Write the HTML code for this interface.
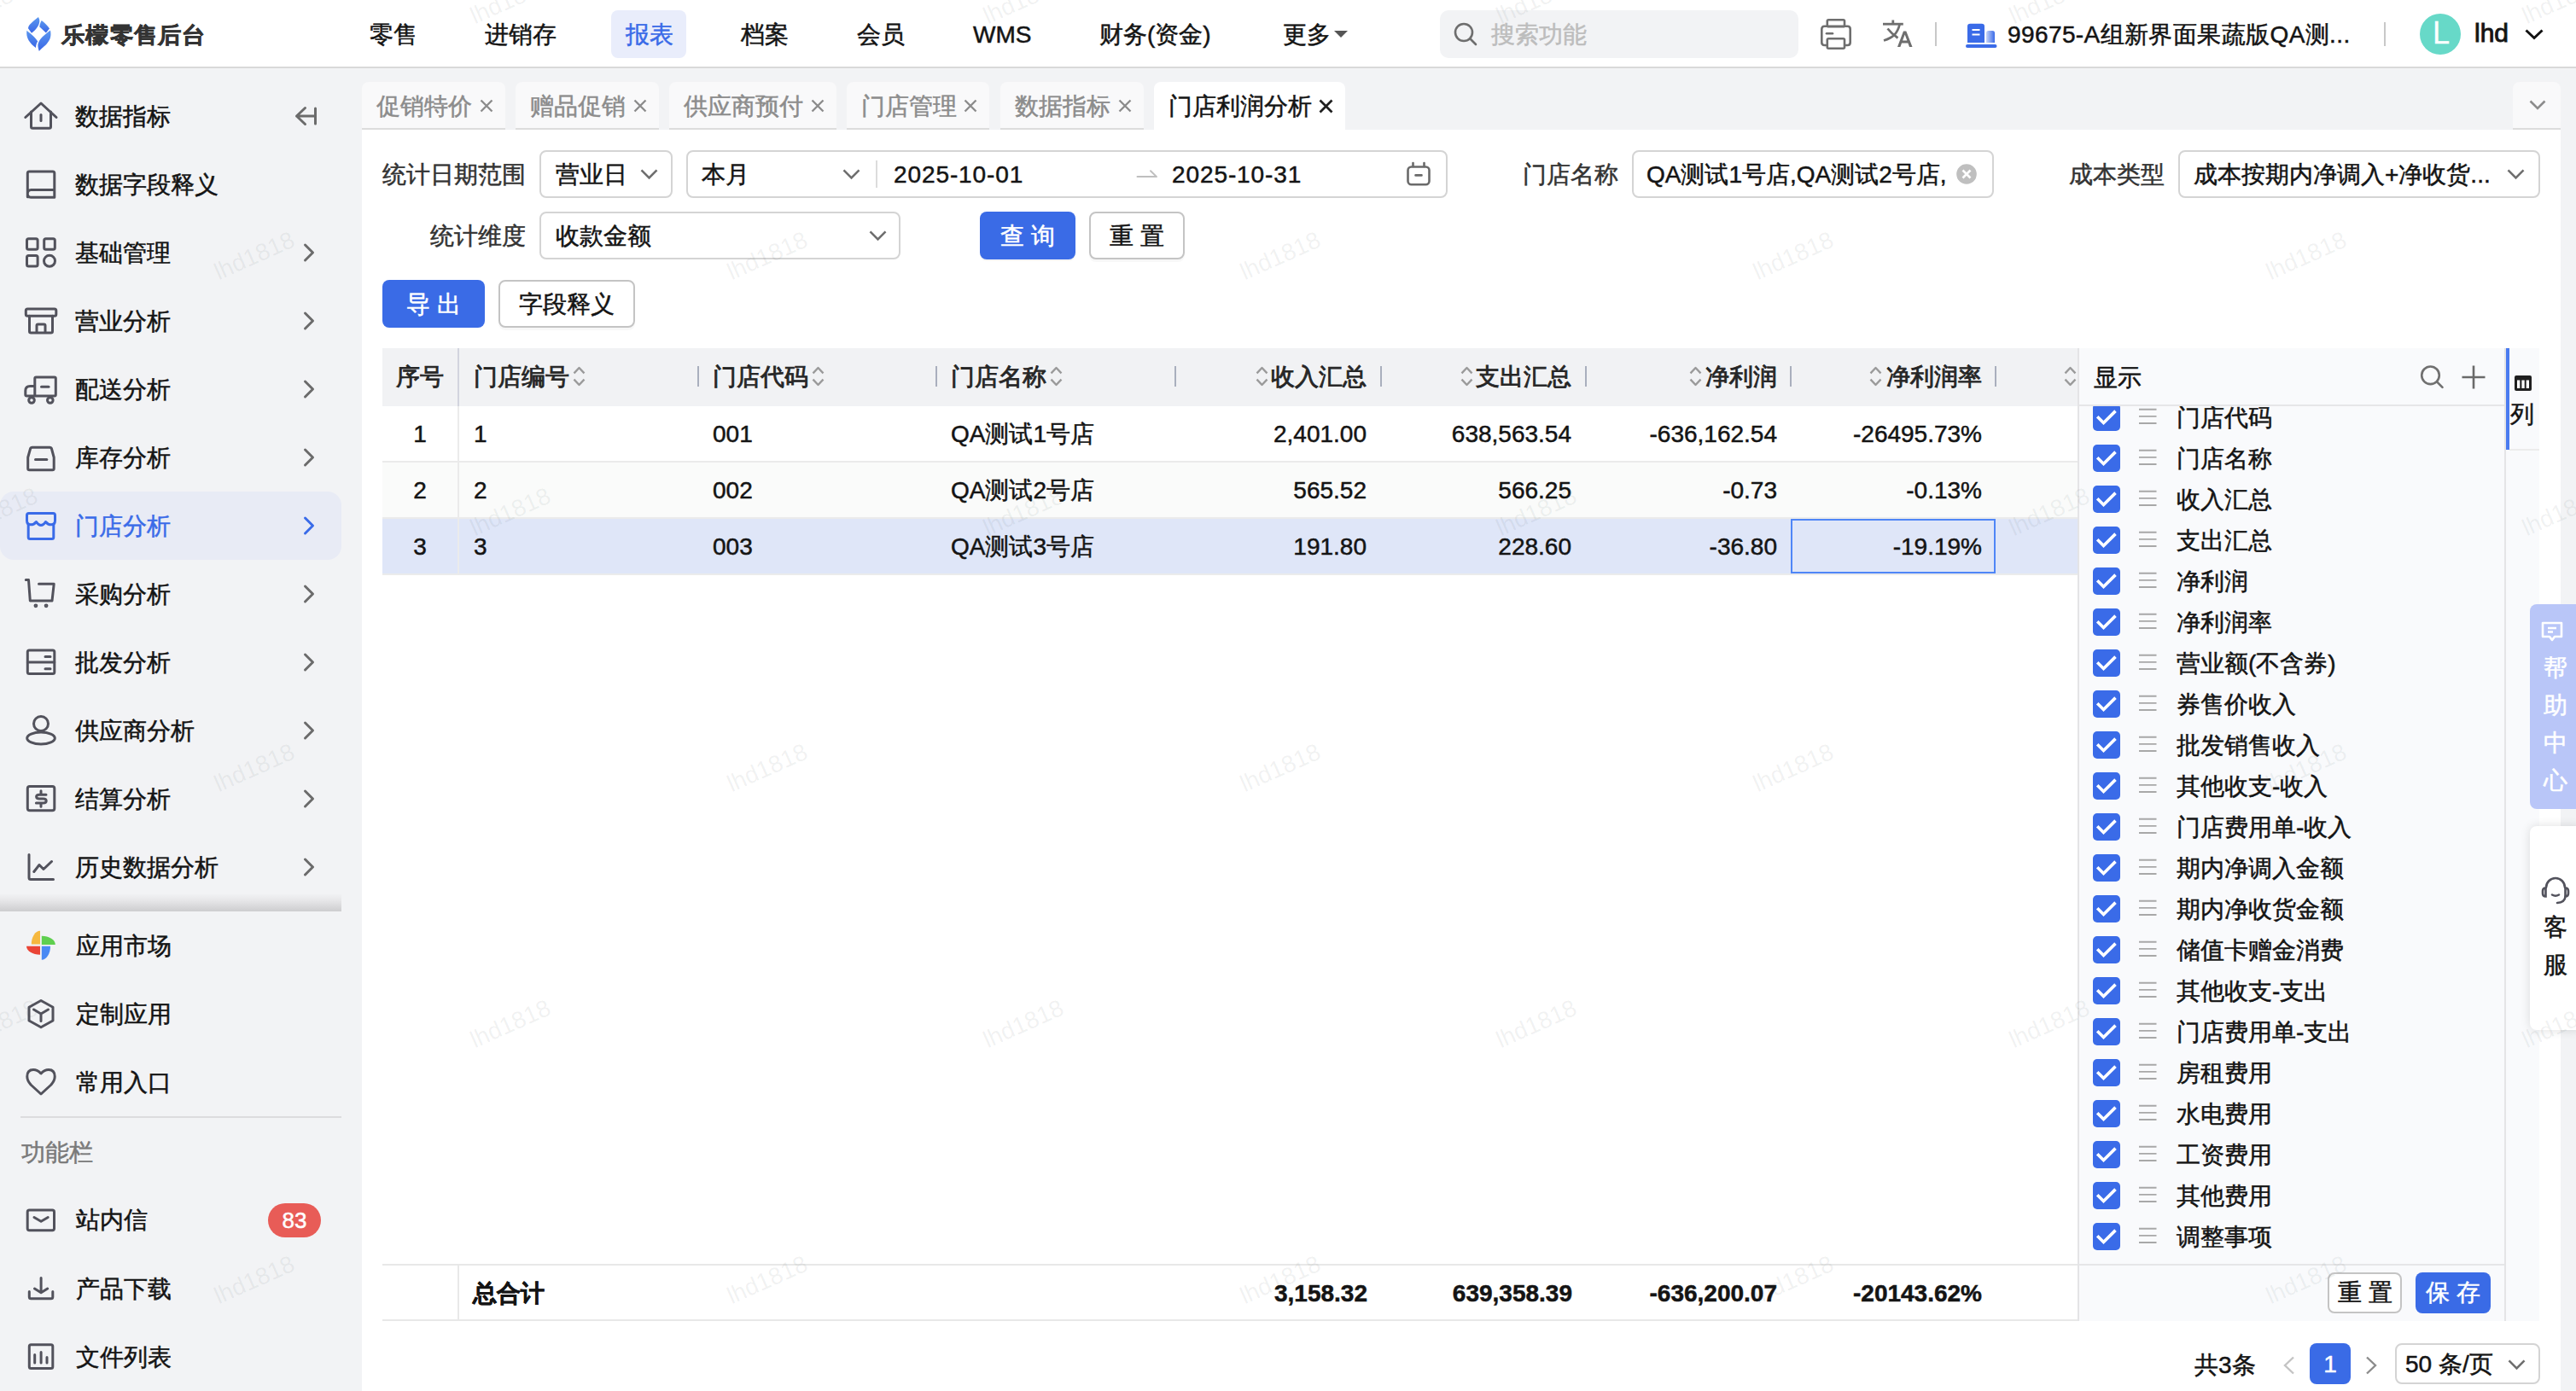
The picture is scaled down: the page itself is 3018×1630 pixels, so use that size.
<!DOCTYPE html>
<html><head><meta charset="utf-8">
<style>
*{box-sizing:border-box;margin:0;padding:0}
html,body{width:3018px;height:1630px;overflow:hidden}
body{position:relative;background:#f2f3f5;font-family:"Liberation Sans",sans-serif;color:#141414}
.a{position:absolute}
.t{position:absolute;white-space:nowrap;font-size:28px;line-height:40px;-webkit-text-stroke:0.5px currentColor}
svg{position:absolute;overflow:visible}
#hdr{left:0;top:0;width:3018px;height:78px;background:#fff}
#hdrb{left:0;top:78px;width:3018px;height:2px;background:#d9d9d9}
#side{left:0;top:80px;width:400px;height:1550px;background:#f2f3f5}
#main{left:424px;top:152px;width:2576px;height:1478px;background:#fff}
#rstrip{left:3000px;top:80px;width:18px;height:1550px;background:#f2f3f5}
.tab{position:absolute;top:96px;height:56px;background:#f9f9fa;border-radius:8px 8px 0 0;border-bottom:2px solid #dcdcdc}
.tab .t{top:8px;left:17px;color:#8c8c8c}
.nav{color:#141414}
.box{position:absolute;border:2px solid #d4d4d4;border-radius:8px;background:#fff}
.btnp{position:absolute;background:#3a6be6;border-radius:8px;color:#fff}
.side .t{color:#141414}
</style></head><body>
<div class="a" id="hdr"></div>
<div class="a" id="hdrb"></div>
<div class="a" id="side"></div>
<div class="a" id="rstrip"></div>
<div class="a" id="main"></div>

<!-- HEADER -->
<svg style="left:30.6px;top:20px" width="29" height="40" viewBox="0 0 29 40">
<defs><linearGradient id="lg" x1="0" y1="0" x2="0" y2="1"><stop offset="0" stop-color="#5b98ef"/><stop offset="1" stop-color="#3a66e6"/></linearGradient></defs>
<path fill="url(#lg)" d="M14,0 C8,5 2,9 2,13.2 L6,18.8 C12,14 16,9 15.2,3 Z"/>
<path fill="url(#lg)" d="M17.7,3.9 C16,7 15,10 15.5,11.4 L22.9,18.5 L27,13.4 C25,10 21,6.5 17.7,3.9 Z"/>
<path fill="url(#lg)" d="M0.4,15.7 C-1,24 4,31 11,36 C11,33 12,30 13.2,28.5 C9,22 4,19 0.4,15.7 Z"/>
<path fill="url(#lg)" d="M28,15.5 C22,20 14,26 13.4,32.6 C13.4,35 14,38 14.9,39.9 C20,34 31,29 28,15.5 Z"/>
</svg>
<div class="t" style="left:72px;top:21px;font-weight:bold;color:#333;letter-spacing:1.3px;font-size:27px;-webkit-text-stroke:0.6px #333;transform:scaleY(0.95);transform-origin:0 50%">乐檬零售后台</div>
<div class="t nav" style="left:433px;top:21px">零售</div>
<div class="t nav" style="left:568px;top:21px">进销存</div>
<div class="a" style="left:716px;top:12px;width:88px;height:56px;background:#e9edfb;border-radius:8px"></div>
<div class="t" style="left:733px;top:21px;color:#3a6be8">报表</div>
<div class="t nav" style="left:868px;top:21px">档案</div>
<div class="t nav" style="left:1004px;top:21px">会员</div>
<div class="t nav" style="left:1140px;top:21px">WMS</div>
<div class="t nav" style="left:1288px;top:21px">财务(资金)</div>
<div class="t nav" style="left:1503px;top:21px">更多</div>
<svg style="left:1563px;top:36px" width="16" height="8" viewBox="0 0 16 8"><path d="M0,0 L16,0 L8,8 Z" fill="#555"/></svg>
<div class="a" style="left:1687px;top:12px;width:420px;height:56px;background:#f2f3f5;border-radius:10px"></div>
<svg style="left:1703px;top:26px" width="28" height="28" viewBox="0 0 28 28"><circle cx="12" cy="12" r="10" fill="none" stroke="#6e6e6e" stroke-width="2.6"/><path d="M19.5,19.5 L26,26" stroke="#6e6e6e" stroke-width="2.6" stroke-linecap="round"/></svg>
<div class="t" style="left:1747px;top:21px;color:#bdbdbd">搜索功能</div>
<!-- print -->
<svg style="left:2133px;top:22px" width="36" height="36" viewBox="0 0 36 36" fill="none" stroke="#6e6e6e" stroke-width="2.6">
<rect x="7.8" y="1.3" width="20.2" height="8" rx="1.5"/>
<path d="M7.5,31 H4.5 Q1.3,31 1.3,27.8 V12 Q1.3,8.8 4.5,8.8 H31.5 Q34.7,8.8 34.7,12 V27.8 Q34.7,31 31.5,31 H28.5"/>
<rect x="7.8" y="23.3" width="20.2" height="11.4" rx="1.5"/>
<path d="M7,17.3 H14" stroke-linecap="round"/>
</svg>
<!-- translate -->
<svg style="left:2206px;top:23px" width="36" height="33" viewBox="0 0 36 33">
<path d="M0,5.2 H23.8" stroke="#6e6e6e" stroke-width="2.8"/>
<path d="M11.8,0.5 V4" stroke="#6e6e6e" stroke-width="2.8"/>
<path d="M19.5,6 C17,16 12,21 1,24.5" fill="none" stroke="#6e6e6e" stroke-width="2.8"/>
<path d="M5.5,10.5 C9,15 13,18.5 17.5,21.5" fill="none" stroke="#6e6e6e" stroke-width="2.8"/>
<path d="M17,32 L24,13.5 H27.3 L34.5,32 H31 L29.4,27.6 H22 L20.4,32 Z M23.1,24.6 H28.3 L25.7,17.5 Z" fill="#6e6e6e"/>
</svg>
<div class="a" style="left:2267px;top:26px;width:2px;height:28px;background:#c8c8c8"></div>
<!-- store -->
<svg style="left:2303px;top:27px" width="37" height="30" viewBox="0 0 37 30">
<defs><linearGradient id="sg" x1="0" y1="0" x2="1" y2="0"><stop offset="0" stop-color="#c7d4f7"/><stop offset="1" stop-color="#3a6be8"/></linearGradient></defs>
<path d="M2,23 V4 Q2,0.7 5.3,0.7 H18.7 Q22,0.7 22,4 V23 Z" fill="#3a6be8"/>
<path d="M7.5,8 H16.5 M7.5,13.5 H16.5" stroke="#fff" stroke-width="2"/>
<path d="M24,23 V11.8 Q24,9 26.8,9 H31.2 Q34,9 34,11.8 V23 Z" fill="url(#sg)"/>
<rect x="0" y="25" width="36.5" height="4" rx="2" fill="#3a6be8"/>
</svg>
<div class="t" style="left:2352px;top:21px;letter-spacing:0.4px">99675-A组新界面果蔬版QA测...</div>
<div class="a" style="left:2793px;top:26px;width:2px;height:28px;background:#c8c8c8"></div>
<div class="a" style="left:2835px;top:16px;width:48px;height:48px;border-radius:50%;background:#67d9c8"></div>
<div class="t" style="left:2836px;top:19px;width:48px;text-align:center;color:#fff;font-size:36px;-webkit-text-stroke:0.3px #fff">L</div>
<div class="t" style="left:2899px;top:19px;font-size:30px;-webkit-text-stroke:0.9px currentColor">lhd</div>
<svg style="left:2958px;top:34px" width="22" height="12" viewBox="0 0 22 12"><path d="M1.5,1.5 L11,10.5 L20.5,1.5" fill="none" stroke="#111" stroke-width="3"/></svg>

<!-- SIDEBAR -->
<div class="a" style="left:0;top:576px;width:400px;height:80px;background:#e8ebf5;border-radius:16px"></div>
<div class="t" style="left:88px;top:117px;color:#141414">数据指标</div>
<div class="t" style="left:88px;top:197px;color:#141414">数据字段释义</div>
<div class="t" style="left:88px;top:277px;color:#141414">基础管理</div>
<svg style="left:355px;top:285px" width="14" height="22" viewBox="0 0 14 22"><path d="M2.5,2 L11.5,11 L2.5,20" fill="none" stroke="#6b6b6b" stroke-width="3" stroke-linecap="round" stroke-linejoin="round"/></svg>
<div class="t" style="left:88px;top:357px;color:#141414">营业分析</div>
<svg style="left:355px;top:365px" width="14" height="22" viewBox="0 0 14 22"><path d="M2.5,2 L11.5,11 L2.5,20" fill="none" stroke="#6b6b6b" stroke-width="3" stroke-linecap="round" stroke-linejoin="round"/></svg>
<div class="t" style="left:88px;top:437px;color:#141414">配送分析</div>
<svg style="left:355px;top:445px" width="14" height="22" viewBox="0 0 14 22"><path d="M2.5,2 L11.5,11 L2.5,20" fill="none" stroke="#6b6b6b" stroke-width="3" stroke-linecap="round" stroke-linejoin="round"/></svg>
<div class="t" style="left:88px;top:517px;color:#141414">库存分析</div>
<svg style="left:355px;top:525px" width="14" height="22" viewBox="0 0 14 22"><path d="M2.5,2 L11.5,11 L2.5,20" fill="none" stroke="#6b6b6b" stroke-width="3" stroke-linecap="round" stroke-linejoin="round"/></svg>
<div class="t" style="left:88px;top:597px;color:#3a6be8">门店分析</div>
<svg style="left:355px;top:605px" width="14" height="22" viewBox="0 0 14 22"><path d="M2.5,2 L11.5,11 L2.5,20" fill="none" stroke="#3a6be8" stroke-width="3" stroke-linecap="round" stroke-linejoin="round"/></svg>
<div class="t" style="left:88px;top:677px;color:#141414">采购分析</div>
<svg style="left:355px;top:685px" width="14" height="22" viewBox="0 0 14 22"><path d="M2.5,2 L11.5,11 L2.5,20" fill="none" stroke="#6b6b6b" stroke-width="3" stroke-linecap="round" stroke-linejoin="round"/></svg>
<div class="t" style="left:88px;top:757px;color:#141414">批发分析</div>
<svg style="left:355px;top:765px" width="14" height="22" viewBox="0 0 14 22"><path d="M2.5,2 L11.5,11 L2.5,20" fill="none" stroke="#6b6b6b" stroke-width="3" stroke-linecap="round" stroke-linejoin="round"/></svg>
<div class="t" style="left:88px;top:837px;color:#141414">供应商分析</div>
<svg style="left:355px;top:845px" width="14" height="22" viewBox="0 0 14 22"><path d="M2.5,2 L11.5,11 L2.5,20" fill="none" stroke="#6b6b6b" stroke-width="3" stroke-linecap="round" stroke-linejoin="round"/></svg>
<div class="t" style="left:88px;top:917px;color:#141414">结算分析</div>
<svg style="left:355px;top:925px" width="14" height="22" viewBox="0 0 14 22"><path d="M2.5,2 L11.5,11 L2.5,20" fill="none" stroke="#6b6b6b" stroke-width="3" stroke-linecap="round" stroke-linejoin="round"/></svg>
<div class="t" style="left:88px;top:997px;color:#141414">历史数据分析</div>
<svg style="left:355px;top:1005px" width="14" height="22" viewBox="0 0 14 22"><path d="M2.5,2 L11.5,11 L2.5,20" fill="none" stroke="#6b6b6b" stroke-width="3" stroke-linecap="round" stroke-linejoin="round"/></svg>
<svg style="left:345px;top:125px" width="28" height="22" viewBox="0 0 28 22"><path d="M12.5,1.5 L2.5,11 L12.5,20.5 M2.5,11 H23 M24.5,2 V20" fill="none" stroke="#6b6b6b" stroke-width="3" stroke-linecap="round" stroke-linejoin="round"/></svg>
<svg style="left:26px;top:116px" width="44" height="40" viewBox="26 116 44 40" fill="none" stroke="#52525c" stroke-width="3" stroke-linecap="round" stroke-linejoin="round"><path d="M29.8,137.5 L48,121 L66,137.5"/><path d="M36.5,131 V148.5 Q36.5,150.3 38.3,150.3 H57.7 Q59.5,150.3 59.5,148.5 V131"/><path d="M48,134.5 V141.5"/></svg>
<svg style="left:28px;top:196px" width="40" height="40" viewBox="28 196 40 40" fill="none" stroke="#52525c" stroke-width="3" stroke-linecap="round" stroke-linejoin="round"><path d="M32.3,230.8 V203 Q32.3,201 34.3,201 H61.8 Q63.8,201 63.8,203 V231.2 H36 Q32.3,231.2 32.3,227 Q32.3,222.5 36.5,222.5 H63.8"/></svg>
<svg style="left:28px;top:276px" width="40" height="40" viewBox="28 276 40 40" fill="none" stroke="#52525c" stroke-width="3" stroke-linecap="round" stroke-linejoin="round"><rect x="31.5" y="279.7" width="12.6" height="12.6" rx="2"/><rect x="51.7" y="279.7" width="12.6" height="12.6" rx="2"/><rect x="31.5" y="299.5" width="12.6" height="12.6" rx="2"/><circle cx="58" cy="305.8" r="6.5"/></svg>
<svg style="left:26px;top:356px" width="44" height="40" viewBox="26 356 44 40" fill="none" stroke="#52525c" stroke-width="3" stroke-linecap="round" stroke-linejoin="round"><rect x="30.3" y="362" width="35.5" height="8.2" rx="2"/><path d="M34.5,370.2 V388.2 Q34.5,390 36.3,390 H59.7 Q61.5,390 61.5,388.2 V370.2"/><path d="M43,389.5 V381.5 Q43,380 44.5,380 H51.5 Q53,380 53,381.5 V389.5"/></svg>
<svg style="left:26px;top:436px" width="44" height="42" viewBox="26 436 44 42" fill="none" stroke="#52525c" stroke-width="3" stroke-linecap="round" stroke-linejoin="round"><path d="M40.8,464 V443.5 Q40.8,442 42.3,442 H63.8 Q65.3,442 65.3,443.5 V462.5 Q65.3,464 63.8,464 H31.5 Q29.8,464 29.8,462.3 V458 Q29.8,452.5 35.3,452.5 H40.8"/><path d="M48.5,453.2 H57"/><circle cx="37" cy="469" r="3.3"/><circle cx="58.8" cy="469" r="3.3"/></svg>
<svg style="left:28px;top:518px" width="40" height="40" viewBox="28 518 40 40" fill="none" stroke="#52525c" stroke-width="3" stroke-linecap="round" stroke-linejoin="round"><path d="M32.7,536 L35.5,526 Q36,524.3 37.8,524.3 H58.2 Q60,524.3 60.5,526 L63.2,536 V549 Q63.2,550.8 61.4,550.8 H34.5 Q32.7,550.8 32.7,549 Z"/><path d="M41.5,538.6 H54.8"/></svg>
<svg style="left:26px;top:596px" width="44" height="42" viewBox="26 596 44 42" fill="none" stroke="#3a6be8" stroke-width="3" stroke-linecap="round" stroke-linejoin="round"><path d="M33.2,614 V629.5 Q33.2,631.5 35.2,631.5 H60.8 Q62.8,631.5 62.8,629.5 V614"/><path d="M31.5,603.8 Q31.5,601.5 33.8,601.5 H62.2 Q64.5,601.5 64.5,603.8 V610 Q64.5,614.8 60,614.8 Q56,614.8 53.5,611.5 Q51,615.5 48,615.5 Q45,615.5 42.5,611.5 Q40,614.8 36,614.8 Q31.5,614.8 31.5,610 Z"/></svg>
<svg style="left:26px;top:676px" width="44" height="40" viewBox="26 676 44 40" fill="none" stroke="#52525c" stroke-width="3" stroke-linecap="round" stroke-linejoin="round"><path d="M30.3,679.6 H33.5 L35.3,704 H61 L63.2,684.3 H45.5"/><circle cx="41.9" cy="709.8" r="0.9" fill="#52525c"/><circle cx="54.1" cy="709.8" r="0.9" fill="#52525c"/></svg>
<svg style="left:28px;top:756px" width="40" height="40" viewBox="28 756 40 40" fill="none" stroke="#52525c" stroke-width="3" stroke-linecap="round" stroke-linejoin="round"><rect x="32.3" y="762" width="31.5" height="27.5" rx="2"/><path d="M32.3,776 H63.8 M53,769.4 H59 M53,783.8 H59"/></svg>
<svg style="left:28px;top:836px" width="40" height="40" viewBox="28 836 40 40" fill="none" stroke="#52525c" stroke-width="3" stroke-linecap="round" stroke-linejoin="round"><circle cx="48" cy="848" r="8.5"/><ellipse cx="48" cy="865" rx="16.3" ry="7"/></svg>
<svg style="left:28px;top:916px" width="40" height="40" viewBox="28 916 40 40" fill="none" stroke="#52525c" stroke-width="3" stroke-linecap="round" stroke-linejoin="round"><rect x="32.3" y="921.5" width="31.5" height="28.3" rx="2.5"/><path d="M54,931.2 H46.2 Q42.6,931.2 42.6,933.6 Q42.6,936 46.2,936 H50.6 Q54.2,936 54.2,938.5 Q54.2,941 50.6,941 H42.4 M48,926.8 V931 M48,941.2 V945.2"/></svg>
<svg style="left:28px;top:996px" width="40" height="40" viewBox="28 996 40 40" fill="none" stroke="#52525c" stroke-width="3" stroke-linecap="round" stroke-linejoin="round"><path d="M34,1001.5 V1028.5 Q34,1030.5 36,1030.5 H62.5"/><path d="M39.8,1021.5 L46,1013.5 L51,1018.5 L60.5,1009.5"/></svg>
<div class="a" style="left:0;top:1047px;width:400px;height:21px;background:linear-gradient(#f2f3f5,#e6e6e8 40%,#cdcdcf)"></div>
<svg style="left:28px;top:1088px" width="40" height="40" viewBox="28 1088 40 40"><path d="M47,1106.6 H36.8 A10.2,15.8 0 0 1 47,1090.8 Z" fill="#f6b83f"/><path d="M48.8,1107 V1096.8 A16,10.2 0 0 1 64.8,1107 Z" fill="#5fcf4f"/><path d="M48.8,1108.8 H59 A10.2,16 0 0 1 48.8,1124.8 Z" fill="#4a8af4"/><path d="M47,1108.8 V1118.8 A16,10 0 0 1 31,1108.8 Z" fill="#ea4436"/></svg>
<svg style="left:28px;top:1168px" width="40" height="40" viewBox="28 1168 40 40" fill="none" stroke="#52525c" stroke-width="3" stroke-linecap="round" stroke-linejoin="round"><path d="M48,1172.5 L62,1180.3 V1196 L48,1203.8 L34,1196 V1180.3 Z"/><path d="M39.5,1183 L48,1188 L56.5,1183 M48,1188 V1196.5"/></svg>
<svg style="left:28px;top:1248px" width="40" height="40" viewBox="28 1248 40 40" fill="none" stroke="#52525c" stroke-width="3" stroke-linecap="round" stroke-linejoin="round"><path d="M48,1258 Q44,1253.5 39,1253.5 Q31.8,1253.5 31.8,1261.5 Q31.8,1266.5 36.5,1271.5 L48,1282 L59.5,1271.5 Q64.2,1266.5 64.2,1261.5 Q64.2,1253.5 57,1253.5 Q52,1253.5 48,1258 Z"/></svg>
<div class="a" style="left:24px;top:1308px;width:376px;height:2px;background:#dcdcde"></div>
<div class="t" style="left:89px;top:1089px">应用市场</div>
<div class="t" style="left:89px;top:1169px">定制应用</div>
<div class="t" style="left:89px;top:1249px">常用入口</div>
<div class="t" style="left:89px;top:1410px">站内信</div>
<div class="t" style="left:89px;top:1491px">产品下载</div>
<div class="t" style="left:89px;top:1571px">文件列表</div>
<div class="t" style="left:25px;top:1331px;color:#7a7a7a;font-weight:500">功能栏</div>
<svg style="left:28px;top:1412px" width="40" height="36" viewBox="28 1412 40 36" fill="none" stroke="#52525c" stroke-width="3" stroke-linecap="round" stroke-linejoin="round"><rect x="32.2" y="1418" width="31.3" height="23.8" rx="2.2"/><path d="M40,1426.5 L48.1,1431.2 L56.2,1426.5"/></svg>
<svg style="left:28px;top:1492px" width="40" height="36" viewBox="28 1492 40 36" fill="none" stroke="#52525c" stroke-width="3" stroke-linecap="round" stroke-linejoin="round"><path d="M34.3,1513.5 V1519.8 Q34.3,1521.8 36.3,1521.8 H59.8 Q61.8,1521.8 61.8,1519.8 V1513.5"/><path d="M48.1,1497.5 V1514.5 M40.5,1510 L48.1,1514.8 L55.7,1510"/></svg>
<svg style="left:28px;top:1570px" width="40" height="40" viewBox="28 1570 40 40" fill="none" stroke="#52525c" stroke-width="3" stroke-linecap="round" stroke-linejoin="round"><rect x="34.3" y="1575.8" width="27.5" height="27.8" rx="2"/><path d="M40.7,1587.5 V1597 M48.1,1584.5 V1597 M55,1590.5 V1597"/></svg>
<div class="a" style="left:314px;top:1410px;width:62px;height:40px;border-radius:20px;background:#e85c57"></div>
<div class="t" style="left:314px;top:1410px;width:62px;text-align:center;color:#fff;font-size:26px">83</div>

<!-- TABS -->
<div class="tab" style="left:424px;width:168px"></div>
<div class="t" style="left:441px;top:105px;color:#8c8c8c">促销特价</div>
<svg style="left:562px;top:116px" width="16" height="16" viewBox="0 0 16 16"><path d="M1.5,1.5 L14.5,14.5 M14.5,1.5 L1.5,14.5" stroke="#8c8c8c" stroke-width="2.4"/></svg>
<div class="tab" style="left:604px;width:168px"></div>
<div class="t" style="left:621px;top:105px;color:#8c8c8c">赠品促销</div>
<svg style="left:742px;top:116px" width="16" height="16" viewBox="0 0 16 16"><path d="M1.5,1.5 L14.5,14.5 M14.5,1.5 L1.5,14.5" stroke="#8c8c8c" stroke-width="2.4"/></svg>
<div class="tab" style="left:784px;width:196px"></div>
<div class="t" style="left:801px;top:105px;color:#8c8c8c">供应商预付</div>
<svg style="left:950px;top:116px" width="16" height="16" viewBox="0 0 16 16"><path d="M1.5,1.5 L14.5,14.5 M14.5,1.5 L1.5,14.5" stroke="#8c8c8c" stroke-width="2.4"/></svg>
<div class="tab" style="left:992px;width:167px"></div>
<div class="t" style="left:1009px;top:105px;color:#8c8c8c">门店管理</div>
<svg style="left:1129px;top:116px" width="16" height="16" viewBox="0 0 16 16"><path d="M1.5,1.5 L14.5,14.5 M14.5,1.5 L1.5,14.5" stroke="#8c8c8c" stroke-width="2.4"/></svg>
<div class="tab" style="left:1172px;width:168px"></div>
<div class="t" style="left:1189px;top:105px;color:#8c8c8c">数据指标</div>
<svg style="left:1310px;top:116px" width="16" height="16" viewBox="0 0 16 16"><path d="M1.5,1.5 L14.5,14.5 M14.5,1.5 L1.5,14.5" stroke="#8c8c8c" stroke-width="2.4"/></svg>
<div class="a" style="left:1352px;top:96px;width:224px;height:56px;background:#fff;border-radius:8px 8px 0 0"></div>
<div class="t" style="left:1369px;top:105px;color:#141414">门店利润分析</div>
<svg style="left:1545px;top:116px" width="17" height="17" viewBox="0 0 17 17"><path d="M1.5,1.5 L15.5,15.5 M15.5,1.5 L1.5,15.5" stroke="#1f1f1f" stroke-width="2.8"/></svg>
<div class="tab" style="left:2944px;width:56px;border-radius:8px 8px 0 0"></div>
<svg style="left:2963px;top:117px" width="20" height="12" viewBox="0 0 20 12"><path d="M1.5,1.5 L10,10 L18.5,1.5" fill="none" stroke="#8c8c8c" stroke-width="2.6"/></svg>

<!-- FILTERS -->
<div class="t" style="left:448px;top:185px;color:#333">统计日期范围</div>
<div class="box" style="left:632px;top:176px;width:156px;height:56px"></div>
<div class="t" style="left:651px;top:185px">营业日</div>
<svg style="left:750px;top:198px" width="21" height="12" viewBox="0 0 21 12"><path d="M1.5,1.3 L10.5,10.3 L19.5,1.3" fill="none" stroke="#6e6e6e" stroke-width="2.6"/></svg>
<div class="box" style="left:804px;top:176px;width:892px;height:56px"></div>
<div class="t" style="left:822px;top:185px">本月</div>
<svg style="left:987px;top:198px" width="21" height="12" viewBox="0 0 21 12"><path d="M1.5,1.3 L10.5,10.3 L19.5,1.3" fill="none" stroke="#6e6e6e" stroke-width="2.6"/></svg>
<div class="a" style="left:1026px;top:188px;width:2px;height:32px;background:#dcdcdc"></div>
<div class="t" style="left:1047px;top:185px;letter-spacing:0.9px">2025-10-01</div>
<svg style="left:1331px;top:199px" width="26" height="10" viewBox="0 0 26 10"><path d="M1.5,8.1 H24 L17,1.3" fill="none" stroke="#bfbfbf" stroke-width="2" stroke-linejoin="round" stroke-linecap="round"/></svg>
<div class="t" style="left:1373px;top:185px;letter-spacing:0.9px">2025-10-31</div>
<svg style="left:1646px;top:188px" width="32" height="32" viewBox="1646 188 32 32" fill="none" stroke="#6a6a6a" stroke-width="2.6" stroke-linecap="round"><rect x="1649.5" y="195.5" width="25" height="20.7" rx="4"/><path d="M1655.5,191 V195 M1668.5,191 V195 M1658.5,205.4 H1665.5"/></svg>
<div class="t" style="left:1784px;top:185px;color:#333">门店名称</div>
<div class="box" style="left:1912px;top:176px;width:424px;height:56px"></div>
<div class="t" style="left:1929px;top:185px">QA测试1号店,QA测试2号店,</div>
<svg style="left:2292px;top:192px" width="24" height="24" viewBox="0 0 24 24"><circle cx="12" cy="12" r="11.8" fill="#bfbfbf"/><path d="M7.5,7.5 L16.5,16.5 M16.5,7.5 L7.5,16.5" stroke="#fff" stroke-width="2.6"/></svg>
<div class="t" style="left:2424px;top:185px;color:#333">成本类型</div>
<div class="box" style="left:2552px;top:176px;width:424px;height:56px"></div>
<div class="t" style="left:2570px;top:185px">成本按期内净调入+净收货...</div>
<svg style="left:2937px;top:198px" width="21" height="12" viewBox="0 0 21 12"><path d="M1.5,1.3 L10.5,10.3 L19.5,1.3" fill="none" stroke="#6e6e6e" stroke-width="2.6"/></svg>
<div class="t" style="left:504px;top:257px;color:#333">统计维度</div>
<div class="box" style="left:632px;top:248px;width:423px;height:56px"></div>
<div class="t" style="left:651px;top:257px">收款金额</div>
<svg style="left:1018px;top:270px" width="21" height="12" viewBox="0 0 21 12"><path d="M1.5,1.3 L10.5,10.3 L19.5,1.3" fill="none" stroke="#6e6e6e" stroke-width="2.6"/></svg>
<div class="btnp" style="left:1148px;top:248px;width:112px;height:56px;box-shadow:0 2px 0 rgba(0,0,0,0.04)"></div>
<div class="t" style="left:1148px;top:257px;width:112px;text-align:center;color:#fff;letter-spacing:8px;text-indent:8px">查询</div>
<div class="box" style="left:1276px;top:248px;width:112px;height:56px;border-color:#c4c4c4;box-shadow:0 3px 1px rgba(0,0,0,0.03)"></div>
<div class="t" style="left:1276px;top:257px;width:112px;text-align:center;letter-spacing:8px;text-indent:8px">重置</div>
<div class="btnp" style="left:448px;top:328px;width:120px;height:56px"></div>
<div class="t" style="left:448px;top:337px;width:120px;text-align:center;color:#fff;letter-spacing:8px;text-indent:8px">导出</div>
<div class="box" style="left:584px;top:328px;width:160px;height:56px;border-color:#c4c4c4;box-shadow:0 3px 1px rgba(0,0,0,0.03)"></div>
<div class="t" style="left:584px;top:337px;width:160px;text-align:center">字段释义</div>

<!-- TABLE -->
<div class="a" style="left:448px;top:408px;width:1987px;height:68px;background:#f1f2f4"></div>
<div class="a" style="left:536px;top:408px;width:2px;height:68px;background:#d2d4de"></div>
<div class="t" style="left:448px;top:422px;width:88px;text-align:center;color:#262626;-webkit-text-stroke:0.9px #262626">序号</div>
<div class="t" style="left:555px;top:422px;color:#262626;-webkit-text-stroke:0.9px #262626">门店编号</div><svg style="left:671px;top:429px" width="15" height="24" viewBox="0 0 15 24"><path d="M1.5,8.3 L7.5,2 L13.5,8.3 M1.5,15.7 L7.5,22 L13.5,15.7" fill="none" stroke="#9a9a9a" stroke-width="2.4" stroke-linejoin="round"/></svg>
<div class="a" style="left:817px;top:429px;width:2px;height:24px;background:#a9afbd"></div>
<div class="t" style="left:835px;top:422px;color:#262626;-webkit-text-stroke:0.9px #262626">门店代码</div><svg style="left:951px;top:429px" width="15" height="24" viewBox="0 0 15 24"><path d="M1.5,8.3 L7.5,2 L13.5,8.3 M1.5,15.7 L7.5,22 L13.5,15.7" fill="none" stroke="#9a9a9a" stroke-width="2.4" stroke-linejoin="round"/></svg>
<div class="a" style="left:1096px;top:429px;width:2px;height:24px;background:#a9afbd"></div>
<div class="t" style="left:1114px;top:422px;color:#262626;-webkit-text-stroke:0.9px #262626">门店名称</div><svg style="left:1230px;top:429px" width="15" height="24" viewBox="0 0 15 24"><path d="M1.5,8.3 L7.5,2 L13.5,8.3 M1.5,15.7 L7.5,22 L13.5,15.7" fill="none" stroke="#9a9a9a" stroke-width="2.4" stroke-linejoin="round"/></svg>
<div class="a" style="left:1376px;top:429px;width:2px;height:24px;background:#a9afbd"></div>
<div class="t" style="left:1201px;top:422px;width:400px;text-align:right;color:#262626;-webkit-text-stroke:0.9px #262626">收入汇总</div><svg style="left:1471px;top:429px" width="15" height="24" viewBox="0 0 15 24"><path d="M1.5,8.3 L7.5,2 L13.5,8.3 M1.5,15.7 L7.5,22 L13.5,15.7" fill="none" stroke="#9a9a9a" stroke-width="2.4" stroke-linejoin="round"/></svg>
<div class="a" style="left:1617px;top:429px;width:2px;height:24px;background:#a9afbd"></div>
<div class="t" style="left:1441px;top:422px;width:400px;text-align:right;color:#262626;-webkit-text-stroke:0.9px #262626">支出汇总</div><svg style="left:1711px;top:429px" width="15" height="24" viewBox="0 0 15 24"><path d="M1.5,8.3 L7.5,2 L13.5,8.3 M1.5,15.7 L7.5,22 L13.5,15.7" fill="none" stroke="#9a9a9a" stroke-width="2.4" stroke-linejoin="round"/></svg>
<div class="a" style="left:1857px;top:429px;width:2px;height:24px;background:#a9afbd"></div>
<div class="t" style="left:1682px;top:422px;width:400px;text-align:right;color:#262626;-webkit-text-stroke:0.9px #262626">净利润</div><svg style="left:1979px;top:429px" width="15" height="24" viewBox="0 0 15 24"><path d="M1.5,8.3 L7.5,2 L13.5,8.3 M1.5,15.7 L7.5,22 L13.5,15.7" fill="none" stroke="#9a9a9a" stroke-width="2.4" stroke-linejoin="round"/></svg>
<div class="a" style="left:2097px;top:429px;width:2px;height:24px;background:#a9afbd"></div>
<div class="t" style="left:1922px;top:422px;width:400px;text-align:right;color:#262626;-webkit-text-stroke:0.9px #262626">净利润率</div><svg style="left:2190px;top:429px" width="15" height="24" viewBox="0 0 15 24"><path d="M1.5,8.3 L7.5,2 L13.5,8.3 M1.5,15.7 L7.5,22 L13.5,15.7" fill="none" stroke="#9a9a9a" stroke-width="2.4" stroke-linejoin="round"/></svg>
<div class="a" style="left:2337px;top:429px;width:2px;height:24px;background:#a9afbd"></div>
<svg style="left:2418px;top:429px" width="15" height="24" viewBox="0 0 15 24"><path d="M1.5,8.3 L7.5,2 L13.5,8.3 M1.5,15.7 L7.5,22 L13.5,15.7" fill="none" stroke="#9a9a9a" stroke-width="2.4" stroke-linejoin="round"/></svg>
<div class="a" style="left:448px;top:476px;width:1987px;height:64px;background:#ffffff"></div>
<div class="a" style="left:448px;top:540px;width:1987px;height:2px;background:#ebebeb"></div>
<div class="a" style="left:536px;top:476px;width:2px;height:64px;background:#ebebeb"></div>
<div class="t" style="left:448px;top:489px;width:88px;text-align:center">1</div>
<div class="t" style="left:555px;top:489px">1</div>
<div class="t" style="left:835px;top:489px">001</div>
<div class="t" style="left:1114px;top:489px">QA测试1号店</div>
<div class="t" style="left:1201px;top:489px;width:400px;text-align:right">2,401.00</div>
<div class="t" style="left:1441px;top:489px;width:400px;text-align:right">638,563.54</div>
<div class="t" style="left:1682px;top:489px;width:400px;text-align:right">-636,162.54</div>
<div class="t" style="left:1922px;top:489px;width:400px;text-align:right">-26495.73%</div>
<div class="a" style="left:448px;top:542px;width:1987px;height:64px;background:#fafbfa"></div>
<div class="a" style="left:448px;top:606px;width:1987px;height:2px;background:#ebebeb"></div>
<div class="a" style="left:536px;top:542px;width:2px;height:64px;background:#ebebeb"></div>
<div class="t" style="left:448px;top:555px;width:88px;text-align:center">2</div>
<div class="t" style="left:555px;top:555px">2</div>
<div class="t" style="left:835px;top:555px">002</div>
<div class="t" style="left:1114px;top:555px">QA测试2号店</div>
<div class="t" style="left:1201px;top:555px;width:400px;text-align:right">565.52</div>
<div class="t" style="left:1441px;top:555px;width:400px;text-align:right">566.25</div>
<div class="t" style="left:1682px;top:555px;width:400px;text-align:right">-0.73</div>
<div class="t" style="left:1922px;top:555px;width:400px;text-align:right">-0.13%</div>
<div class="a" style="left:448px;top:608px;width:1987px;height:64px;background:#dfe6f8"></div>
<div class="a" style="left:448px;top:672px;width:1987px;height:2px;background:#ebebeb"></div>
<div class="a" style="left:536px;top:608px;width:2px;height:64px;background:#ebebeb"></div>
<div class="t" style="left:448px;top:621px;width:88px;text-align:center">3</div>
<div class="t" style="left:555px;top:621px">3</div>
<div class="t" style="left:835px;top:621px">003</div>
<div class="t" style="left:1114px;top:621px">QA测试3号店</div>
<div class="t" style="left:1201px;top:621px;width:400px;text-align:right">191.80</div>
<div class="t" style="left:1441px;top:621px;width:400px;text-align:right">228.60</div>
<div class="t" style="left:1682px;top:621px;width:400px;text-align:right">-36.80</div>
<div class="t" style="left:1922px;top:621px;width:400px;text-align:right">-19.19%</div>
<div class="a" style="left:2098px;top:608px;width:240px;height:64px;border:2px solid #4f86f7"></div>
<div class="a" style="left:448px;top:1481px;width:1987px;height:2px;background:#e8e8e8"></div>
<div class="a" style="left:448px;top:1546px;width:1987px;height:2px;background:#e8e8e8"></div>
<div class="a" style="left:536px;top:1483px;width:2px;height:63px;background:#e8e8e8"></div>
<div class="t" style="left:554px;top:1496px;font-weight:bold">总合计</div>
<div class="t" style="left:1202px;top:1496px;width:400px;text-align:right;font-weight:bold">3,158.32</div>
<div class="t" style="left:1442px;top:1496px;width:400px;text-align:right;font-weight:bold">639,358.39</div>
<div class="t" style="left:1682px;top:1496px;width:400px;text-align:right;font-weight:bold">-636,200.07</div>
<div class="t" style="left:1922px;top:1496px;width:400px;text-align:right;font-weight:bold">-20143.62%</div>

<!-- COLUMN PANEL -->
<div class="a" style="left:2936px;top:408px;width:39px;height:1140px;background:#f9fafc"></div>
<div class="a" style="left:2434px;top:408px;width:502px;height:1140px;background:#f9fafc;border-left:2px solid #e4e4e6;border-right:2px solid #e4e4e6"></div>
<div class="a" style="left:2436px;top:474px;width:498px;height:2px;background:#e6e6e8"></div>
<div class="t" style="left:2453px;top:423px">显示</div>
<svg style="left:2835px;top:428px" width="30" height="28" viewBox="0 0 30 28" fill="none" stroke="#707070" stroke-width="2.6" stroke-linecap="round"><circle cx="12.5" cy="11.8" r="10.3"/><path d="M20.3,19.6 L26.5,25.8"/></svg>
<svg style="left:2884px;top:428px" width="28" height="28" viewBox="0 0 28 28" stroke="#6a6a6a" stroke-width="2.6"><path d="M14,0.5 V27.5 M0.5,14 H27.5"/></svg>
<div class="a" style="left:2436px;top:476px;width:498px;height:1005px;overflow:hidden">
<div class="a" style="left:16px;top:-3px;width:32px;height:32px;border-radius:5px;background:#3a6be8"></div>
<svg style="left:16px;top:-3px" width="32" height="32" viewBox="0 0 32 32"><path d="M5.2,15.3 L12.5,22.5 L26.5,8.6" fill="none" stroke="#fff" stroke-width="3.6"/></svg>
<svg style="left:70px;top:2px" width="21" height="22" viewBox="0 0 21 22"><path d="M0,1.8 H20.5 M0,9.9 H20.5 M0,18 H20.5" stroke="#a8a8a8" stroke-width="1.9"/></svg>
<div class="t" style="left:114px;top:-6px">门店代码</div>
<div class="a" style="left:16px;top:45px;width:32px;height:32px;border-radius:5px;background:#3a6be8"></div>
<svg style="left:16px;top:45px" width="32" height="32" viewBox="0 0 32 32"><path d="M5.2,15.3 L12.5,22.5 L26.5,8.6" fill="none" stroke="#fff" stroke-width="3.6"/></svg>
<svg style="left:70px;top:50px" width="21" height="22" viewBox="0 0 21 22"><path d="M0,1.8 H20.5 M0,9.9 H20.5 M0,18 H20.5" stroke="#a8a8a8" stroke-width="1.9"/></svg>
<div class="t" style="left:114px;top:42px">门店名称</div>
<div class="a" style="left:16px;top:93px;width:32px;height:32px;border-radius:5px;background:#3a6be8"></div>
<svg style="left:16px;top:93px" width="32" height="32" viewBox="0 0 32 32"><path d="M5.2,15.3 L12.5,22.5 L26.5,8.6" fill="none" stroke="#fff" stroke-width="3.6"/></svg>
<svg style="left:70px;top:98px" width="21" height="22" viewBox="0 0 21 22"><path d="M0,1.8 H20.5 M0,9.9 H20.5 M0,18 H20.5" stroke="#a8a8a8" stroke-width="1.9"/></svg>
<div class="t" style="left:114px;top:90px">收入汇总</div>
<div class="a" style="left:16px;top:141px;width:32px;height:32px;border-radius:5px;background:#3a6be8"></div>
<svg style="left:16px;top:141px" width="32" height="32" viewBox="0 0 32 32"><path d="M5.2,15.3 L12.5,22.5 L26.5,8.6" fill="none" stroke="#fff" stroke-width="3.6"/></svg>
<svg style="left:70px;top:146px" width="21" height="22" viewBox="0 0 21 22"><path d="M0,1.8 H20.5 M0,9.9 H20.5 M0,18 H20.5" stroke="#a8a8a8" stroke-width="1.9"/></svg>
<div class="t" style="left:114px;top:138px">支出汇总</div>
<div class="a" style="left:16px;top:189px;width:32px;height:32px;border-radius:5px;background:#3a6be8"></div>
<svg style="left:16px;top:189px" width="32" height="32" viewBox="0 0 32 32"><path d="M5.2,15.3 L12.5,22.5 L26.5,8.6" fill="none" stroke="#fff" stroke-width="3.6"/></svg>
<svg style="left:70px;top:194px" width="21" height="22" viewBox="0 0 21 22"><path d="M0,1.8 H20.5 M0,9.9 H20.5 M0,18 H20.5" stroke="#a8a8a8" stroke-width="1.9"/></svg>
<div class="t" style="left:114px;top:186px">净利润</div>
<div class="a" style="left:16px;top:237px;width:32px;height:32px;border-radius:5px;background:#3a6be8"></div>
<svg style="left:16px;top:237px" width="32" height="32" viewBox="0 0 32 32"><path d="M5.2,15.3 L12.5,22.5 L26.5,8.6" fill="none" stroke="#fff" stroke-width="3.6"/></svg>
<svg style="left:70px;top:242px" width="21" height="22" viewBox="0 0 21 22"><path d="M0,1.8 H20.5 M0,9.9 H20.5 M0,18 H20.5" stroke="#a8a8a8" stroke-width="1.9"/></svg>
<div class="t" style="left:114px;top:234px">净利润率</div>
<div class="a" style="left:16px;top:285px;width:32px;height:32px;border-radius:5px;background:#3a6be8"></div>
<svg style="left:16px;top:285px" width="32" height="32" viewBox="0 0 32 32"><path d="M5.2,15.3 L12.5,22.5 L26.5,8.6" fill="none" stroke="#fff" stroke-width="3.6"/></svg>
<svg style="left:70px;top:290px" width="21" height="22" viewBox="0 0 21 22"><path d="M0,1.8 H20.5 M0,9.9 H20.5 M0,18 H20.5" stroke="#a8a8a8" stroke-width="1.9"/></svg>
<div class="t" style="left:114px;top:282px">营业额(不含券)</div>
<div class="a" style="left:16px;top:333px;width:32px;height:32px;border-radius:5px;background:#3a6be8"></div>
<svg style="left:16px;top:333px" width="32" height="32" viewBox="0 0 32 32"><path d="M5.2,15.3 L12.5,22.5 L26.5,8.6" fill="none" stroke="#fff" stroke-width="3.6"/></svg>
<svg style="left:70px;top:338px" width="21" height="22" viewBox="0 0 21 22"><path d="M0,1.8 H20.5 M0,9.9 H20.5 M0,18 H20.5" stroke="#a8a8a8" stroke-width="1.9"/></svg>
<div class="t" style="left:114px;top:330px">券售价收入</div>
<div class="a" style="left:16px;top:381px;width:32px;height:32px;border-radius:5px;background:#3a6be8"></div>
<svg style="left:16px;top:381px" width="32" height="32" viewBox="0 0 32 32"><path d="M5.2,15.3 L12.5,22.5 L26.5,8.6" fill="none" stroke="#fff" stroke-width="3.6"/></svg>
<svg style="left:70px;top:386px" width="21" height="22" viewBox="0 0 21 22"><path d="M0,1.8 H20.5 M0,9.9 H20.5 M0,18 H20.5" stroke="#a8a8a8" stroke-width="1.9"/></svg>
<div class="t" style="left:114px;top:378px">批发销售收入</div>
<div class="a" style="left:16px;top:429px;width:32px;height:32px;border-radius:5px;background:#3a6be8"></div>
<svg style="left:16px;top:429px" width="32" height="32" viewBox="0 0 32 32"><path d="M5.2,15.3 L12.5,22.5 L26.5,8.6" fill="none" stroke="#fff" stroke-width="3.6"/></svg>
<svg style="left:70px;top:434px" width="21" height="22" viewBox="0 0 21 22"><path d="M0,1.8 H20.5 M0,9.9 H20.5 M0,18 H20.5" stroke="#a8a8a8" stroke-width="1.9"/></svg>
<div class="t" style="left:114px;top:426px">其他收支-收入</div>
<div class="a" style="left:16px;top:477px;width:32px;height:32px;border-radius:5px;background:#3a6be8"></div>
<svg style="left:16px;top:477px" width="32" height="32" viewBox="0 0 32 32"><path d="M5.2,15.3 L12.5,22.5 L26.5,8.6" fill="none" stroke="#fff" stroke-width="3.6"/></svg>
<svg style="left:70px;top:482px" width="21" height="22" viewBox="0 0 21 22"><path d="M0,1.8 H20.5 M0,9.9 H20.5 M0,18 H20.5" stroke="#a8a8a8" stroke-width="1.9"/></svg>
<div class="t" style="left:114px;top:474px">门店费用单-收入</div>
<div class="a" style="left:16px;top:525px;width:32px;height:32px;border-radius:5px;background:#3a6be8"></div>
<svg style="left:16px;top:525px" width="32" height="32" viewBox="0 0 32 32"><path d="M5.2,15.3 L12.5,22.5 L26.5,8.6" fill="none" stroke="#fff" stroke-width="3.6"/></svg>
<svg style="left:70px;top:530px" width="21" height="22" viewBox="0 0 21 22"><path d="M0,1.8 H20.5 M0,9.9 H20.5 M0,18 H20.5" stroke="#a8a8a8" stroke-width="1.9"/></svg>
<div class="t" style="left:114px;top:522px">期内净调入金额</div>
<div class="a" style="left:16px;top:573px;width:32px;height:32px;border-radius:5px;background:#3a6be8"></div>
<svg style="left:16px;top:573px" width="32" height="32" viewBox="0 0 32 32"><path d="M5.2,15.3 L12.5,22.5 L26.5,8.6" fill="none" stroke="#fff" stroke-width="3.6"/></svg>
<svg style="left:70px;top:578px" width="21" height="22" viewBox="0 0 21 22"><path d="M0,1.8 H20.5 M0,9.9 H20.5 M0,18 H20.5" stroke="#a8a8a8" stroke-width="1.9"/></svg>
<div class="t" style="left:114px;top:570px">期内净收货金额</div>
<div class="a" style="left:16px;top:621px;width:32px;height:32px;border-radius:5px;background:#3a6be8"></div>
<svg style="left:16px;top:621px" width="32" height="32" viewBox="0 0 32 32"><path d="M5.2,15.3 L12.5,22.5 L26.5,8.6" fill="none" stroke="#fff" stroke-width="3.6"/></svg>
<svg style="left:70px;top:626px" width="21" height="22" viewBox="0 0 21 22"><path d="M0,1.8 H20.5 M0,9.9 H20.5 M0,18 H20.5" stroke="#a8a8a8" stroke-width="1.9"/></svg>
<div class="t" style="left:114px;top:618px">储值卡赠金消费</div>
<div class="a" style="left:16px;top:669px;width:32px;height:32px;border-radius:5px;background:#3a6be8"></div>
<svg style="left:16px;top:669px" width="32" height="32" viewBox="0 0 32 32"><path d="M5.2,15.3 L12.5,22.5 L26.5,8.6" fill="none" stroke="#fff" stroke-width="3.6"/></svg>
<svg style="left:70px;top:674px" width="21" height="22" viewBox="0 0 21 22"><path d="M0,1.8 H20.5 M0,9.9 H20.5 M0,18 H20.5" stroke="#a8a8a8" stroke-width="1.9"/></svg>
<div class="t" style="left:114px;top:666px">其他收支-支出</div>
<div class="a" style="left:16px;top:717px;width:32px;height:32px;border-radius:5px;background:#3a6be8"></div>
<svg style="left:16px;top:717px" width="32" height="32" viewBox="0 0 32 32"><path d="M5.2,15.3 L12.5,22.5 L26.5,8.6" fill="none" stroke="#fff" stroke-width="3.6"/></svg>
<svg style="left:70px;top:722px" width="21" height="22" viewBox="0 0 21 22"><path d="M0,1.8 H20.5 M0,9.9 H20.5 M0,18 H20.5" stroke="#a8a8a8" stroke-width="1.9"/></svg>
<div class="t" style="left:114px;top:714px">门店费用单-支出</div>
<div class="a" style="left:16px;top:765px;width:32px;height:32px;border-radius:5px;background:#3a6be8"></div>
<svg style="left:16px;top:765px" width="32" height="32" viewBox="0 0 32 32"><path d="M5.2,15.3 L12.5,22.5 L26.5,8.6" fill="none" stroke="#fff" stroke-width="3.6"/></svg>
<svg style="left:70px;top:770px" width="21" height="22" viewBox="0 0 21 22"><path d="M0,1.8 H20.5 M0,9.9 H20.5 M0,18 H20.5" stroke="#a8a8a8" stroke-width="1.9"/></svg>
<div class="t" style="left:114px;top:762px">房租费用</div>
<div class="a" style="left:16px;top:813px;width:32px;height:32px;border-radius:5px;background:#3a6be8"></div>
<svg style="left:16px;top:813px" width="32" height="32" viewBox="0 0 32 32"><path d="M5.2,15.3 L12.5,22.5 L26.5,8.6" fill="none" stroke="#fff" stroke-width="3.6"/></svg>
<svg style="left:70px;top:818px" width="21" height="22" viewBox="0 0 21 22"><path d="M0,1.8 H20.5 M0,9.9 H20.5 M0,18 H20.5" stroke="#a8a8a8" stroke-width="1.9"/></svg>
<div class="t" style="left:114px;top:810px">水电费用</div>
<div class="a" style="left:16px;top:861px;width:32px;height:32px;border-radius:5px;background:#3a6be8"></div>
<svg style="left:16px;top:861px" width="32" height="32" viewBox="0 0 32 32"><path d="M5.2,15.3 L12.5,22.5 L26.5,8.6" fill="none" stroke="#fff" stroke-width="3.6"/></svg>
<svg style="left:70px;top:866px" width="21" height="22" viewBox="0 0 21 22"><path d="M0,1.8 H20.5 M0,9.9 H20.5 M0,18 H20.5" stroke="#a8a8a8" stroke-width="1.9"/></svg>
<div class="t" style="left:114px;top:858px">工资费用</div>
<div class="a" style="left:16px;top:909px;width:32px;height:32px;border-radius:5px;background:#3a6be8"></div>
<svg style="left:16px;top:909px" width="32" height="32" viewBox="0 0 32 32"><path d="M5.2,15.3 L12.5,22.5 L26.5,8.6" fill="none" stroke="#fff" stroke-width="3.6"/></svg>
<svg style="left:70px;top:914px" width="21" height="22" viewBox="0 0 21 22"><path d="M0,1.8 H20.5 M0,9.9 H20.5 M0,18 H20.5" stroke="#a8a8a8" stroke-width="1.9"/></svg>
<div class="t" style="left:114px;top:906px">其他费用</div>
<div class="a" style="left:16px;top:957px;width:32px;height:32px;border-radius:5px;background:#3a6be8"></div>
<svg style="left:16px;top:957px" width="32" height="32" viewBox="0 0 32 32"><path d="M5.2,15.3 L12.5,22.5 L26.5,8.6" fill="none" stroke="#fff" stroke-width="3.6"/></svg>
<svg style="left:70px;top:962px" width="21" height="22" viewBox="0 0 21 22"><path d="M0,1.8 H20.5 M0,9.9 H20.5 M0,18 H20.5" stroke="#a8a8a8" stroke-width="1.9"/></svg>
<div class="t" style="left:114px;top:954px">调整事项</div>
</div>
<div class="a" style="left:2436px;top:1481px;width:498px;height:2px;background:#e6e6e8"></div>
<div class="box" style="left:2727px;top:1491px;width:87px;height:48px;border-radius:8px;border-color:#c4c4c4"></div>
<div class="t" style="left:2727px;top:1495px;width:87px;text-align:center;letter-spacing:8px;text-indent:8px">重置</div>
<div class="btnp" style="left:2830px;top:1491px;width:88px;height:48px"></div>
<div class="t" style="left:2830px;top:1495px;width:88px;text-align:center;color:#fff;letter-spacing:8px;text-indent:8px">保存</div>
<div class="a" style="left:2936px;top:408px;width:4px;height:119px;background:#4a7bf0"></div>
<div class="a" style="left:2940px;top:526px;width:35px;height:2px;background:#ececec"></div>
<svg style="left:2946px;top:440px" width="20" height="18" viewBox="0 0 20 18"><rect x="0" y="0" width="20" height="18" rx="2" fill="#1f1f1f"/><rect x="3" y="5.5" width="3.3" height="9.5" fill="#fff"/><rect x="8.4" y="5.5" width="3.3" height="9.5" fill="#fff"/><rect x="13.7" y="5.5" width="3.3" height="9.5" fill="#fff"/></svg>
<div class="t" style="left:2941px;top:466px">列</div>
<div class="t" style="left:2571px;top:1580px">共3条</div>
<svg style="left:2674px;top:1589px" width="16" height="22" viewBox="0 0 16 22"><path d="M13,1.5 L3,11 L13,20.5" fill="none" stroke="#c4c4c4" stroke-width="2.4"/></svg>
<div class="btnp" style="left:2706px;top:1574px;width:48px;height:48px"></div>
<div class="t" style="left:2706px;top:1579px;width:48px;text-align:center;color:#fff">1</div>
<svg style="left:2770px;top:1589px" width="16" height="22" viewBox="0 0 16 22"><path d="M3,1.5 L13,11 L3,20.5" fill="none" stroke="#8c8c8c" stroke-width="2.4"/></svg>
<div class="box" style="left:2806px;top:1574px;width:170px;height:48px"></div>
<div class="t" style="left:2818px;top:1579px">50 条/页</div>
<svg style="left:2938px;top:1593px" width="21" height="12" viewBox="0 0 21 12"><path d="M1.5,1.3 L10.5,10.3 L19.5,1.3" fill="none" stroke="#6e6e6e" stroke-width="2.6"/></svg>
<div class="a" style="left:2964px;top:708px;width:60px;height:240px;border-radius:8px 0 0 8px;background:#b9c6f8"></div>
<svg style="left:2976px;top:728px" width="28" height="26" viewBox="0 0 28 26" fill="none" stroke="#fff" stroke-width="2.6" stroke-linejoin="round"><path d="M3,2 H25 V18 H17 L14,22 L11,18 H3 Z"/><path d="M9,8 H19 M9,12.5 H15"/></svg>
<div class="t" style="left:2980px;top:763px;color:#fff;font-size:28px">帮</div>
<div class="t" style="left:2980px;top:807px;color:#fff;font-size:28px">助</div>
<div class="t" style="left:2980px;top:851px;color:#fff;font-size:28px">中</div>
<div class="t" style="left:2980px;top:895px;color:#fff;font-size:28px">心</div>
<div class="a" style="left:2964px;top:968px;width:60px;height:239px;border-radius:8px 0 0 8px;background:#fff;box-shadow:0 0 12px rgba(0,0,0,0.13)"></div>
<svg style="left:2977px;top:1026px" width="34" height="34" viewBox="0 0 34 34" fill="none" stroke="#52525c" stroke-width="2.6" stroke-linecap="round"><path d="M6,14 A11,11 0 0 1 28,14"/><path d="M5.5,14.5 Q2,14.5 2,18 V21 Q2,24.5 5.5,24.5 V14.5 Z"/><path d="M28.5,14.5 Q32,14.5 32,18 V21 Q32,24.5 28.5,24.5 V14.5 Z"/><path d="M28.5,24.5 Q28,31.5 19,32"/><path d="M13,22.5 Q17,25 21,22.5"/></svg>
<div class="t" style="left:2980px;top:1067px;font-size:28px">客</div>
<div class="t" style="left:2980px;top:1111px;font-size:28px">服</div>

<!-- WATERMARK -->
<div class="a" style="left:0;top:0;width:3018px;height:1630px;overflow:hidden;pointer-events:none">
<div style="position:absolute;left:-63.0px;top:1180px;width:120px;height:40px;line-height:40px;text-align:center;font-size:28px;color:rgba(40,60,60,0.07);transform:rotate(-24deg);white-space:nowrap">lhd1818</div>
<div style="position:absolute;left:-63.0px;top:580px;width:120px;height:40px;line-height:40px;text-align:center;font-size:28px;color:rgba(40,60,60,0.07);transform:rotate(-24deg);white-space:nowrap">lhd1818</div>
<div style="position:absolute;left:-63.0px;top:-20px;width:120px;height:40px;line-height:40px;text-align:center;font-size:28px;color:rgba(40,60,60,0.07);transform:rotate(-24deg);white-space:nowrap">lhd1818</div>
<div style="position:absolute;left:237.5px;top:1480px;width:120px;height:40px;line-height:40px;text-align:center;font-size:28px;color:rgba(40,60,60,0.07);transform:rotate(-24deg);white-space:nowrap">lhd1818</div>
<div style="position:absolute;left:237.5px;top:880px;width:120px;height:40px;line-height:40px;text-align:center;font-size:28px;color:rgba(40,60,60,0.07);transform:rotate(-24deg);white-space:nowrap">lhd1818</div>
<div style="position:absolute;left:237.5px;top:280px;width:120px;height:40px;line-height:40px;text-align:center;font-size:28px;color:rgba(40,60,60,0.07);transform:rotate(-24deg);white-space:nowrap">lhd1818</div>
<div style="position:absolute;left:538.0px;top:1180px;width:120px;height:40px;line-height:40px;text-align:center;font-size:28px;color:rgba(40,60,60,0.07);transform:rotate(-24deg);white-space:nowrap">lhd1818</div>
<div style="position:absolute;left:538.0px;top:580px;width:120px;height:40px;line-height:40px;text-align:center;font-size:28px;color:rgba(40,60,60,0.07);transform:rotate(-24deg);white-space:nowrap">lhd1818</div>
<div style="position:absolute;left:538.0px;top:-20px;width:120px;height:40px;line-height:40px;text-align:center;font-size:28px;color:rgba(40,60,60,0.07);transform:rotate(-24deg);white-space:nowrap">lhd1818</div>
<div style="position:absolute;left:838.5px;top:1480px;width:120px;height:40px;line-height:40px;text-align:center;font-size:28px;color:rgba(40,60,60,0.07);transform:rotate(-24deg);white-space:nowrap">lhd1818</div>
<div style="position:absolute;left:838.5px;top:880px;width:120px;height:40px;line-height:40px;text-align:center;font-size:28px;color:rgba(40,60,60,0.07);transform:rotate(-24deg);white-space:nowrap">lhd1818</div>
<div style="position:absolute;left:838.5px;top:280px;width:120px;height:40px;line-height:40px;text-align:center;font-size:28px;color:rgba(40,60,60,0.07);transform:rotate(-24deg);white-space:nowrap">lhd1818</div>
<div style="position:absolute;left:1139.0px;top:1180px;width:120px;height:40px;line-height:40px;text-align:center;font-size:28px;color:rgba(40,60,60,0.07);transform:rotate(-24deg);white-space:nowrap">lhd1818</div>
<div style="position:absolute;left:1139.0px;top:580px;width:120px;height:40px;line-height:40px;text-align:center;font-size:28px;color:rgba(40,60,60,0.07);transform:rotate(-24deg);white-space:nowrap">lhd1818</div>
<div style="position:absolute;left:1139.0px;top:-20px;width:120px;height:40px;line-height:40px;text-align:center;font-size:28px;color:rgba(40,60,60,0.07);transform:rotate(-24deg);white-space:nowrap">lhd1818</div>
<div style="position:absolute;left:1439.5px;top:1480px;width:120px;height:40px;line-height:40px;text-align:center;font-size:28px;color:rgba(40,60,60,0.07);transform:rotate(-24deg);white-space:nowrap">lhd1818</div>
<div style="position:absolute;left:1439.5px;top:880px;width:120px;height:40px;line-height:40px;text-align:center;font-size:28px;color:rgba(40,60,60,0.07);transform:rotate(-24deg);white-space:nowrap">lhd1818</div>
<div style="position:absolute;left:1439.5px;top:280px;width:120px;height:40px;line-height:40px;text-align:center;font-size:28px;color:rgba(40,60,60,0.07);transform:rotate(-24deg);white-space:nowrap">lhd1818</div>
<div style="position:absolute;left:1740.0px;top:1180px;width:120px;height:40px;line-height:40px;text-align:center;font-size:28px;color:rgba(40,60,60,0.07);transform:rotate(-24deg);white-space:nowrap">lhd1818</div>
<div style="position:absolute;left:1740.0px;top:580px;width:120px;height:40px;line-height:40px;text-align:center;font-size:28px;color:rgba(40,60,60,0.07);transform:rotate(-24deg);white-space:nowrap">lhd1818</div>
<div style="position:absolute;left:1740.0px;top:-20px;width:120px;height:40px;line-height:40px;text-align:center;font-size:28px;color:rgba(40,60,60,0.07);transform:rotate(-24deg);white-space:nowrap">lhd1818</div>
<div style="position:absolute;left:2040.5px;top:1480px;width:120px;height:40px;line-height:40px;text-align:center;font-size:28px;color:rgba(40,60,60,0.07);transform:rotate(-24deg);white-space:nowrap">lhd1818</div>
<div style="position:absolute;left:2040.5px;top:880px;width:120px;height:40px;line-height:40px;text-align:center;font-size:28px;color:rgba(40,60,60,0.07);transform:rotate(-24deg);white-space:nowrap">lhd1818</div>
<div style="position:absolute;left:2040.5px;top:280px;width:120px;height:40px;line-height:40px;text-align:center;font-size:28px;color:rgba(40,60,60,0.07);transform:rotate(-24deg);white-space:nowrap">lhd1818</div>
<div style="position:absolute;left:2341.0px;top:1180px;width:120px;height:40px;line-height:40px;text-align:center;font-size:28px;color:rgba(40,60,60,0.07);transform:rotate(-24deg);white-space:nowrap">lhd1818</div>
<div style="position:absolute;left:2341.0px;top:580px;width:120px;height:40px;line-height:40px;text-align:center;font-size:28px;color:rgba(40,60,60,0.07);transform:rotate(-24deg);white-space:nowrap">lhd1818</div>
<div style="position:absolute;left:2341.0px;top:-20px;width:120px;height:40px;line-height:40px;text-align:center;font-size:28px;color:rgba(40,60,60,0.07);transform:rotate(-24deg);white-space:nowrap">lhd1818</div>
<div style="position:absolute;left:2641.5px;top:1480px;width:120px;height:40px;line-height:40px;text-align:center;font-size:28px;color:rgba(40,60,60,0.07);transform:rotate(-24deg);white-space:nowrap">lhd1818</div>
<div style="position:absolute;left:2641.5px;top:880px;width:120px;height:40px;line-height:40px;text-align:center;font-size:28px;color:rgba(40,60,60,0.07);transform:rotate(-24deg);white-space:nowrap">lhd1818</div>
<div style="position:absolute;left:2641.5px;top:280px;width:120px;height:40px;line-height:40px;text-align:center;font-size:28px;color:rgba(40,60,60,0.07);transform:rotate(-24deg);white-space:nowrap">lhd1818</div>
<div style="position:absolute;left:2942.0px;top:1180px;width:120px;height:40px;line-height:40px;text-align:center;font-size:28px;color:rgba(40,60,60,0.07);transform:rotate(-24deg);white-space:nowrap">lhd1818</div>
<div style="position:absolute;left:2942.0px;top:580px;width:120px;height:40px;line-height:40px;text-align:center;font-size:28px;color:rgba(40,60,60,0.07);transform:rotate(-24deg);white-space:nowrap">lhd1818</div>
<div style="position:absolute;left:2942.0px;top:-20px;width:120px;height:40px;line-height:40px;text-align:center;font-size:28px;color:rgba(40,60,60,0.07);transform:rotate(-24deg);white-space:nowrap">lhd1818</div>
</div>
</body></html>
